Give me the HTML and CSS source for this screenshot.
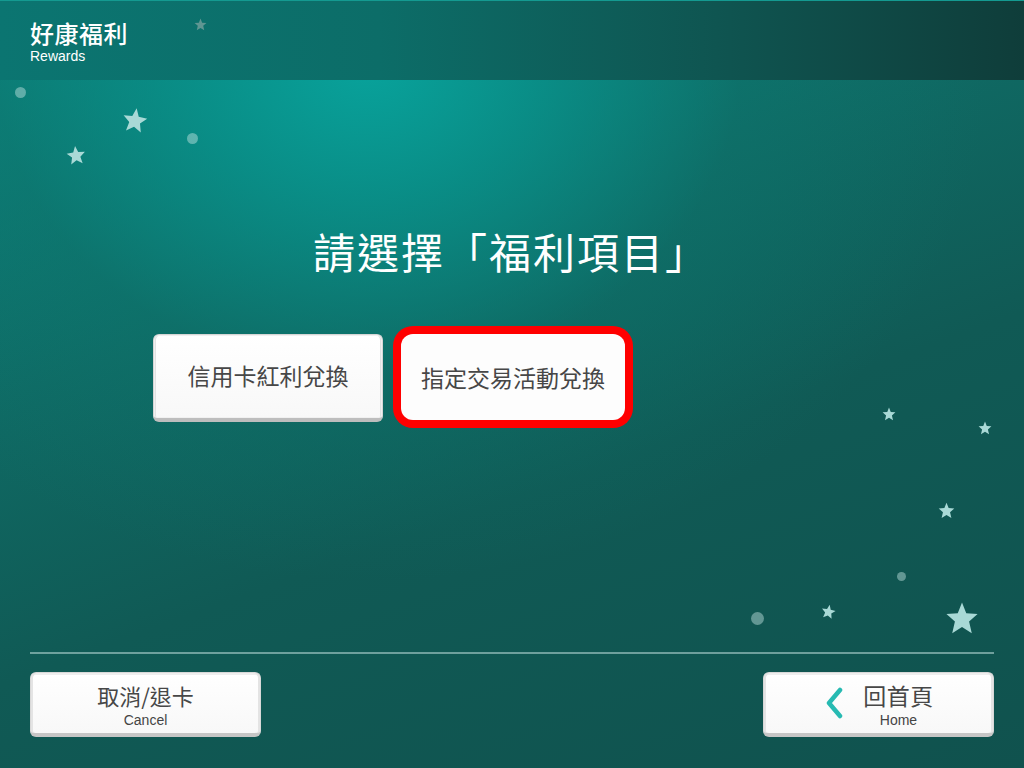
FILE: index.html
```html
<!DOCTYPE html>
<html lang="zh-Hant">
<head>
<meta charset="utf-8">
<title>好康福利 Rewards</title>
<link rel="stylesheet" href="styles.css">
</head>
<body>
<div class="screen">
  <svg width="0" height="0" class="defs">
    <defs>
      <symbol id="star" viewBox="0 0 24 24">
        <polygon points="12,1 15,8.6 23,9.2 17,14.5 18.9,22.7 12,18.3 5.1,22.7 7,14.5 1,9.2 9,8.6"/>
      </symbol>
    </defs>
  </svg>

  <header class="topbar">
    <div class="topbar-title">好康福利</div>
    <div class="topbar-sub">Rewards</div>
  </header>

  <div class="deco" aria-hidden="true">
    <svg class="star star-dim" style="left:194px;top:18px;width:13px;height:13px"><use href="#star"/></svg>
    <span class="dot" style="left:15px;top:87px;width:11px;height:11px"></span>
    <svg class="star" style="left:122px;top:107px;width:26px;height:26px;transform:rotate(8deg)"><use href="#star"/></svg>
    <svg class="star" style="left:66px;top:145px;width:20px;height:20px;transform:rotate(-6deg)"><use href="#star"/></svg>
    <span class="dot" style="left:187px;top:133px;width:11px;height:11px"></span>
    <svg class="star" style="left:882px;top:407px;width:14px;height:14px"><use href="#star"/></svg>
    <svg class="star" style="left:978px;top:421px;width:14px;height:14px"><use href="#star"/></svg>
    <svg class="star" style="left:938px;top:502px;width:17px;height:17px"><use href="#star"/></svg>
    <span class="dot" style="left:897px;top:572px;width:9px;height:9px"></span>
    <span class="dot" style="left:751px;top:612px;width:13px;height:13px"></span>
    <svg class="star" style="left:821px;top:604px;width:15px;height:15px;transform:rotate(10deg)"><use href="#star"/></svg>
    <svg class="star" style="left:945px;top:601px;width:34px;height:34px"><use href="#star"/></svg>
  </div>

  <main class="content">
    <h1 class="prompt">請選擇「福利項目」</h1>
    <div class="options">
      <button class="opt-btn">信用卡紅利兌換</button>
      <button class="opt-btn is-selected">指定交易活動兌換</button>
    </div>
  </main>

  <footer class="bottom">
    <div class="divider"></div>
    <div class="nav-row">
      <button class="nav-btn">
        <span class="nav-text">
          <span class="nav-main">取消/退卡</span>
          <span class="nav-sub">Cancel</span>
        </span>
      </button>
      <button class="nav-btn nav-home">
        <svg class="chev" viewBox="0 0 20 32" width="20" height="32"><polyline points="15,3 4,16 15,29"/></svg>
        <span class="nav-text">
          <span class="nav-main">回首頁</span>
          <span class="nav-sub">Home</span>
        </span>
      </button>
    </div>
  </footer>
</div>
</body>
</html>
```

FILE: styles.css
```css
* { box-sizing: border-box; }
html, body { margin: 0; padding: 0; }
body {
  width: 1024px;
  height: 768px;
  overflow: hidden;
  font-family: "Noto Sans CJK TC", "Noto Sans", "Liberation Sans", sans-serif;
}
.defs { position: absolute; }
.screen {
  position: relative;
  width: 1024px;
  height: 768px;
  overflow: hidden;
  display: flex;
  flex-direction: column;
  background:
    radial-gradient(ellipse 620px 520px at 36% 8%, rgba(8,165,158,0.95) 0%, rgba(8,150,143,0.7) 30%, rgba(12,120,112,0.35) 60%, rgba(16,86,80,0) 100%),
    linear-gradient(160deg, #0b857e 0%, #0f6a64 35%, #105a55 60%, #10524e 100%);
}
.topbar {
  height: 80px;
  padding: 18px 30px 0;
  border-top: 1px solid #149a91;
  background: linear-gradient(to right, #0b7571 0%, #0c6d68 37%, #0f5551 70%, #0f3d3a 100%);
  color: #fff;
  position: relative;
  z-index: 1;
}
.topbar-title {
  font-size: 24px;
  line-height: 28px;
  font-weight: 500;
  letter-spacing: 0.5px;
}
.topbar-sub {
  font-family: "Liberation Sans", "Noto Sans", sans-serif;
  font-size: 14px;
  line-height: 16px;
  margin-top: 1px;
}
.deco { position: absolute; inset: 0; z-index: 2; pointer-events: none; }
.star { position: absolute; fill: #a9d9d6; }
.star-dim { fill: #5f9692; }
.dot { position: absolute; border-radius: 50%; background: rgba(200,230,228,0.45); }

.content {
  flex: 1;
  display: flex;
  flex-direction: column;
  position: relative;
  z-index: 3;
}
.prompt {
  margin: 145px 0 0;
  text-align: center;
  padding-right: 2px;
  color: #fff;
  font-size: 42px;
  line-height: 52px;
  font-weight: 400;
  letter-spacing: 2px;
}
.options {
  display: flex;
  gap: 18px;
  margin: 57px 0 0 153px;
  align-items: flex-start;
}
.opt-btn {
  width: 230px;
  height: 88px;
  border: 1px solid #d6d6d6;
  border-bottom: 4px solid #bdbdbd;
  border-radius: 6px;
  background: linear-gradient(#ffffff, #f8f8f8);
  box-shadow: inset 0 0 0 1px #f0f0f0, inset 2px 0 0 #e2e2e2, inset -2px 0 0 #e2e2e2;
  color: #474747;
  font-family: "Noto Sans CJK TC", sans-serif;
  font-size: 23px;
  line-height: 1;
  padding: 0 0 2px;
  cursor: pointer;
}
.opt-btn.is-selected {
  width: 224px;
  height: 86px;
  border: none;
  border-radius: 12px;
  box-shadow: 0 0 0 8px #ff0000;
  background: #fdfdfd;
  padding: 0;
}

.bottom {
  position: relative;
  z-index: 3;
  padding: 0 30px 31px;
}
.divider {
  height: 2px;
  background: rgba(190,220,218,0.55);
  margin-bottom: 18px;
}
.nav-row {
  display: flex;
  justify-content: space-between;
}
.nav-btn {
  width: 231px;
  height: 65px;
  border: 1px solid #d8d8d8;
  border-bottom: 4px solid #c6c6c6;
  border-radius: 6px;
  background: linear-gradient(#ffffff, #f8f8f8);
  box-shadow: inset 2px 0 0 #e4e4e4, inset -2px 0 0 #e4e4e4, inset 0 2px 0 #eeeeee;
  display: flex;
  align-items: center;
  justify-content: center;
  gap: 18px;
  padding: 4px 0 0;
  color: #444;
  cursor: pointer;
}
.nav-text {
  display: flex;
  flex-direction: column;
  align-items: center;
}
.nav-main {
  font-family: "Noto Sans CJK TC", sans-serif;
  font-size: 22px;
  line-height: 26px;
  color: #474747;
}
.nav-sub {
  font-family: "Liberation Sans", "Noto Sans", sans-serif;
  font-size: 14px;
  line-height: 16px;
  margin-top: 4px;
  color: #444;
}
.nav-home { padding-left: 2px; }
.nav-home .chev { margin-top: -4px; }
.nav-home .nav-main { font-size: 23px; letter-spacing: 0.5px; }
.chev {
  fill: none;
  stroke: #27bab2;
  stroke-width: 4.5;
  stroke-linecap: round;
  stroke-linejoin: round;
}
```
